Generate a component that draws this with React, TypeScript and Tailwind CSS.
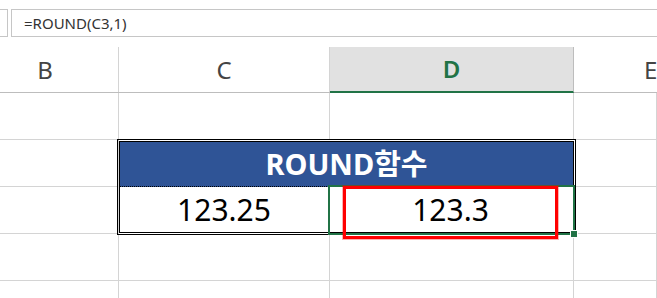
import React from 'react'

const font = { fontFamily: '"Noto Sans", "Noto Sans CJK KR", sans-serif' }

function Cell({ className = '' }: { className?: string }) {
  return <div className={`border-r border-b border-[#d4d4d4] ${className}`} />
}

export default function App() {
  return (
    <div className="w-[657px] h-[298px] overflow-hidden bg-white" style={font}>
      {/* formula bar */}
      <div className="h-[47px] pt-[9px] flex">
        <div className="w-[8px] h-[28px] border-y border-r border-[#c6c6c6]" />
        <div className="ml-[3px] flex-1 h-[28px] border-y border-l border-[#c6c6c6] flex items-center pl-[12px] text-[15px] text-[#333]">
          =ROUND(C3,1)
        </div>
      </div>

      {/* column headers */}
      <div className="grid grid-cols-[119px_211px_244px_1fr] h-[46px] border-b border-[#bdbdbd] text-[24px] text-[#444]">
        <div className="border-r border-[#d4d4d4] flex items-center justify-center pr-[28px]">B</div>
        <div className="border-r border-[#d4d4d4] flex items-center justify-center">C</div>
        <div className="border-r border-[#bdbdbd] bg-[#e1e1e1] border-b-2 border-b-[#217346] -mb-[1px] flex items-center justify-center text-[#217346] font-semibold">
          D
        </div>
        <div className="flex items-center justify-center pl-[70px]">E</div>
      </div>

      {/* sheet body */}
      <div className="grid grid-cols-[119px_211px_244px_1fr] auto-rows-[47px]">
        <Cell />
        <Cell />
        <Cell />
        <Cell />

        <Cell className="row-start-2 col-start-1" />
        <Cell className="row-start-3 col-start-1" />
        <Cell className="row-start-2 col-start-4" />
        <Cell className="row-start-3 col-start-4" />

        <div className="row-start-2 row-span-2 col-start-2 col-span-2 -ml-[2px] -mr-[2px] -mt-[1px] -mb-[1px] border-[3px] border-double border-black relative flex flex-col">
          <div className="h-[45px] bg-[#2f5496] border-b border-dotted border-black flex items-center justify-center text-white text-[29px] font-bold">
            ROUND함수
          </div>
          <div className="flex-1 flex text-[30px] text-black">
            <div className="w-[208px] flex items-center justify-center">123.25</div>
            <div className="flex-1 flex items-center justify-center">123.3</div>
          </div>

          {/* selected cell */}
          <div className="absolute left-[208px] top-[43px] w-[247px] h-[50px] border-2 border-[#217346] pointer-events-none">
            <div className="absolute left-[241px] top-[44px] w-[6px] h-[6px] bg-[#217346] ring-1 ring-white" />
          </div>

          {/* red highlight */}
          <div className="absolute left-[223px] top-[44px] w-[215px] h-[53px] border-[3px] border-[#ff0000] shadow-[0_0_0_1px_rgba(255,0,0,0.3)] pointer-events-none" />
        </div>

        <Cell className="row-start-4" />
        <Cell className="row-start-4" />
        <Cell className="row-start-4" />
        <Cell className="row-start-4" />
        <Cell className="row-start-5" />
        <Cell className="row-start-5" />
        <Cell className="row-start-5" />
        <Cell className="row-start-5" />
      </div>
    </div>
  )
}
